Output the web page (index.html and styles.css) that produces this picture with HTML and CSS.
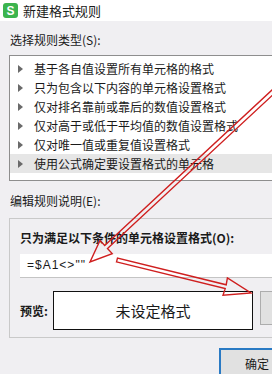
FILE: index.html
```html
<!DOCTYPE html>
<html lang="zh-CN">
<head>
  <meta charset="UTF-8" />
  <title>新建格式规则</title>
  <link rel="stylesheet" href="styles.css">
</head>
<body>
  <div class="dialog">
    <div class="titlebar">
      <span class="app-icon">S</span>
      <span class="title">新建格式规则</span>
    </div>

    <div class="content">
      <div class="label">选择规则类型(S):</div>
      <ul class="rule-list">
        <li><span class="tri"></span>基于各自值设置所有单元格的格式</li>
        <li><span class="tri"></span>只为包含以下内容的单元格设置格式</li>
        <li><span class="tri"></span>仅对排名靠前或靠后的数值设置格式</li>
        <li><span class="tri"></span>仅对高于或低于平均值的数值设置格式</li>
        <li><span class="tri"></span>仅对唯一值或重复值设置格式</li>
        <li class="selected"><span class="tri"></span>使用公式确定要设置格式的单元格</li>
      </ul>

      <div class="label edit-label">编辑规则说明(E):</div>
      <div class="group">
        <div class="group-title">只为满足以下条件的单元格设置格式(O):</div>
        <div class="formula">=$A1&lt;&gt;""</div>
        <div class="preview-row">
          <span class="preview-label">预览:</span>
          <div class="preview-box">未设定格式</div>
          <div class="format-btn"></div>
        </div>
      </div>

      <div class="footer">
        <button class="ok-btn">确定</button>
      </div>
    </div>
  </div>

  <!-- red annotation arrows -->
  <svg class="arrows" width="272" height="374" viewBox="0 0 272 374">
    <polygon points="276.4,91.5 107.5,248.5 112.2,253.6 90,262 100,240.4 104.7,245.5 273.6,88.5" />
    <polygon points="116.5,261.9 225.2,288.6 223.0,295.3 251,293 227.4,277.9 226.2,284.8 117.5,258.1" />
  </svg>
</body>
</html>
```

FILE: styles.css
```css
body {
  margin: 0;
  width: 272px;
  height: 374px;
  overflow: hidden;
  position: relative;
  background: #f0eff2;
  font-family: "Noto Sans CJK SC", "Noto Sans", sans-serif;
  color: #1a1a1a;
}

.titlebar {
  height: 21px;
  background: #fff;
  display: flex;
  align-items: center;
  padding-left: 3px;
}

.app-icon {
  width: 15px;
  height: 15px;
  border-radius: 3px;
  background: #3cb44e;
  color: #fff;
  font: bold 12px "Liberation Sans", sans-serif;
  display: flex;
  align-items: center;
  justify-content: center;
  margin-right: 5px;
}

.title {
  font-size: 13px;
  line-height: 21px;
}

.content {
  padding: 11px 0 0 9px;
}

.label {
  font-size: 12px;
  line-height: 16px;
  padding-left: 1px;
}

.rule-list {
  list-style: none;
  margin: 7px 0 0 0;
  padding: 3px 0 7px 0;
  width: 263px;
  height: 114px;
  overflow: hidden;
  background: #fff;
  border: 1px solid #8e8e8e;
  border-right: none;
}

.rule-list li {
  height: 19px;
  line-height: 19px;
  font-size: 12px;
  display: flex;
  align-items: center;
  white-space: nowrap;
}

.rule-list li.selected {
  background: #e6e6e6;
}

.tri {
  width: 0;
  height: 0;
  border-top: 4px solid transparent;
  border-bottom: 4px solid transparent;
  border-left: 5px solid #6a6a6a;
  margin: 0 11px 0 8px;
}

.edit-label {
  margin-top: 12px;
}

.group {
  margin-top: 9px;
  width: 263px;
  height: 120px;
  border: 1px solid #c9c9c9;
  border-right: none;
  padding: 11px 0 0 10px;
  box-sizing: border-box;
}

.group-title {
  font-size: 12px;
  font-weight: bold;
  line-height: 16px;
  white-space: nowrap;
}

.formula {
  margin-top: 8px;
  height: 23px;
  line-height: 23px;
  background: #fff;
  border-bottom: 1px solid #c4c4c4;
  padding-left: 7px;
  font-family: "Liberation Sans", sans-serif;
  font-size: 12px;
  letter-spacing: 1px;
}

.preview-row {
  display: flex;
  align-items: flex-start;
  margin-top: 13px;
}

.preview-label {
  font-size: 12px;
  font-weight: bold;
  line-height: 39px;
  width: 33px;
}

.preview-box {
  width: 200px;
  height: 39px;
  box-sizing: border-box;
  border: 1px solid #111;
  background: #fff;
  font-size: 15px;
  display: flex;
  align-items: center;
  justify-content: center;
}

.format-btn {
  margin-left: 7px;
  width: 12px;
  height: 34px;
  box-sizing: border-box;
  background: #e1e1e1;
  border: 1px solid #adadad;
  border-right: none;
}

.footer {
  margin-top: 10px;
  padding-left: 210px;
}

.ok-btn {
  width: 53px;
  height: 30px;
  background: #e1e1e1;
  border: 2px solid #2a7ac4;
  border-right: none;
  font-family: inherit;
  font-size: 12px;
  text-align: left;
  padding: 0 0 0 24px;
  color: #1a1a1a;
  white-space: nowrap;
}

.arrows {
  position: absolute;
  left: 0;
  top: 0;
}

.arrows polygon {
  fill: none;
  stroke: #cf1f1f;
  stroke-width: 1.4;
  stroke-linejoin: miter;
}
```
